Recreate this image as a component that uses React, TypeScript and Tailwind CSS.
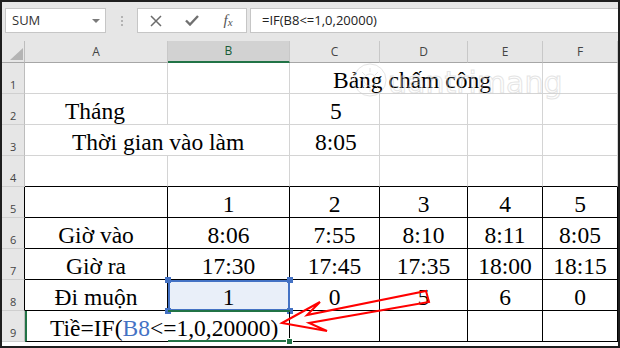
import React from "react";

type Cell = { t?: React.ReactNode; cls?: string; noR?: boolean };

const top: Cell[][] = [
    [{}, {}, { t: "Bảng chấm công", cls: "pl-[43px]", noR: true }, { noR: true }, {}, {}],
    [{ t: "Tháng", cls: "pl-[40px]" }, {}, { t: "5", cls: "pl-[40px]" }, {}, {}, {}],
    [{ t: "Thời gian vào làm", cls: "pl-[47px]", noR: true }, {}, { t: "8:05", cls: "pl-[25px]" }, {}, {}, {}],
    [{}, {}, {}, {}, {}, {}],
];

const table = [
    ["", "1", "2", "3", "4", "5"],
    ["Giờ vào", "8:06", "7:55", "8:10", "8:11", "8:05"],
    ["Giờ ra", "17:30", "17:45", "17:35", "18:00", "18:15"],
    ["Đi muộn", "1", "0", "5", "6", "0"],
];

const cols = ["A", "B", "C", "D", "E", "F"];

const cellBase = "h-[31px] flex items-end whitespace-nowrap text-[23.5px] leading-[26px] text-black font-['Liberation_Serif','Times_New_Roman',serif]";

function RowHead({ n, dark }: { n: number; dark?: boolean }) {
    return (
        <div className={`h-[31px] bg-[#e6e6e6] border-b border-b-[#cfcfcf] border-r flex items-end pl-[8px] pb-[2px] text-[11px] leading-[13px] text-[#444] ${dark ? "border-r-black" : "border-r-[#bdbdbd]"}`}>
            {n}
        </div>
    );
}

function Toolbar() {
    return (
        <div className="h-[39px] bg-[#e6e6e6] flex items-start pt-[6px] pl-[3px]">
            <div className="w-[101px] h-[25px] bg-white border border-[#c6c6c6] flex items-center justify-between pl-[6px] pr-[5px]">
                <span className="text-[13px] leading-none text-[#333]">SUM</span>
                <svg width="8" height="4" viewBox="0 0 8 4">
                    <path d="M0 0h8L4 4z" fill="#7a7a7a" />
                </svg>
            </div>
            <div className="w-[31px] h-[25px] flex flex-col items-center justify-center gap-[2px]">
                <span className="w-[2px] h-[2px] bg-[#b3b3b3]" />
                <span className="w-[2px] h-[2px] bg-[#b3b3b3]" />
                <span className="w-[2px] h-[2px] bg-[#b3b3b3]" />
            </div>
            <div className="w-[110px] h-[25px] bg-white border border-[#c6c6c6] flex">
                <div className="w-[36px] flex items-center justify-center">
                    <svg width="12" height="12" viewBox="0 0 12 12">
                        <path d="M1 1l10 10M11 1L1 11" stroke="#6b6b6b" strokeWidth="1.5" />
                    </svg>
                </div>
                <div className="w-[36px] flex items-center justify-center">
                    <svg width="14" height="11" viewBox="0 0 14 11">
                        <path d="M1 5.5l4 4L13 1" stroke="#707070" strokeWidth="2.4" fill="none" />
                    </svg>
                </div>
                <div className="w-[36px] flex items-center justify-center font-['Liberation_Serif',serif] italic text-[#555]">
                    <span className="text-[15px] leading-none">f</span>
                    <span className="text-[11px] leading-none mt-[4px]">x</span>
                </div>
            </div>
            <div className="ml-[3px] flex-1 h-[25px] bg-white border border-r-0 border-[#c6c6c6] flex items-center pl-[11px] text-[13px] text-[#222]">
                {"=IF(B8<=1,0,20000)"}
            </div>
        </div>
    );
}

function Sheet() {
    return (
        <div className="grid grid-cols-[23px_143px_122px_90px_88px_75px_75px] grid-rows-[22px_repeat(9,31px)]">
            <div className="relative bg-[#e6e6e6] border-r border-b border-r-[#bdbdbd] border-b-[#a6a6a6]">
                <svg className="absolute left-0 top-0" width="23" height="22" viewBox="0 0 23 22">
                    <path d="M8 19h13V7z" fill="#b4b4b4" />
                </svg>
            </div>
            {cols.map((c) => (
                <div
                    key={c}
                    className={`flex items-center justify-center text-[12px] border-r border-r-[#c8c8c8] ${
                        c === "B" ? "bg-[#d2d2d2] text-[#185c37] border-b-2 border-b-[#217346]" : "bg-[#e6e6e6] text-[#444] border-b border-b-[#a6a6a6]"
                    }`}
                >
                    {c}
                </div>
            ))}

            {top.map((row, i) => (
                <React.Fragment key={`t${i}`}>
                    <RowHead n={i + 1} />
                    {row.map((cell, j) => (
                        <div
                            key={j}
                            className={`${cellBase} border-b ${cell.noR ? "" : "border-r border-r-[#d4d4d4]"} ${i === 3 ? "border-b-black" : "border-b-[#d4d4d4]"} ${cell.cls ?? ""}`}
                        >
                            {cell.t}
                        </div>
                    ))}
                </React.Fragment>
            ))}

            {table.map((row, i) => (
                <React.Fragment key={`r${i}`}>
                    <RowHead n={i + 5} dark />
                    {row.map((v, j) => {
                        const sel = i === 3 && j === 1;
                        return (
                            <div key={j} className={`${cellBase} justify-center border-r border-b border-black ${sel ? "relative bg-[#e9eff9]" : ""}`}>
                                {v}
                                {sel && (
                                    <>
                                        <div className="absolute left-0 top-0 -right-px -bottom-px border-2 border-[#4472c4]" />
                                        <span className="absolute -left-[3px] -top-[3px] w-[6px] h-[6px] bg-[#4472c4]" />
                                        <span className="absolute -right-[4px] -top-[3px] w-[6px] h-[6px] bg-[#4472c4]" />
                                        <span className="absolute -left-[3px] -bottom-[4px] w-[6px] h-[6px] bg-[#4472c4]" />
                                        <span className="absolute -right-[4px] -bottom-[4px] w-[6px] h-[6px] bg-[#4472c4]" />
                                    </>
                                )}
                            </div>
                        );
                    })}
                </React.Fragment>
            ))}

            <RowHead n={9} />
            <div className={`${cellBase} border-b border-b-black border-l-2 border-l-[#217346] pl-[23px]`}>
                <span>
                    Tiề=IF(<span className="text-[#4472c4]">B8</span>
                    {"<=1,0,20000)"}
                </span>
                <span className="w-px h-[27px] bg-black mb-[1px]" />
            </div>
            <div className={`${cellBase} relative border-r border-b border-black`}>
                <div className="absolute left-0 -right-px -top-px -bottom-px border-y-2 border-[#217346]" />
                <span className="absolute -right-[4px] -bottom-[4px] w-[7px] h-[7px] bg-[#217346] border border-white" />
            </div>
            <div className={`${cellBase} border-r border-b border-black`} />
            <div className={`${cellBase} border-r border-b border-black`} />
            <div className={`${cellBase} border-r border-b border-black`} />
            <div className={`${cellBase} border-r border-b border-black`} />
        </div>
    );
}

export default function App() {
    return (
        <div className="w-[620px] h-[348px] border-2 border-[#1e1e1e] bg-white overflow-hidden font-['Open_Sans',sans-serif]">
            <div className="relative w-[616px] h-[344px]">
                <Toolbar />
                <Sheet />
                <svg className="absolute left-0 top-0 pointer-events-none" width="616" height="344" viewBox="2 2 616 344">
                    {/* watermark */}
                    <g opacity="0.55" fill="none" stroke="#cfcfcf" strokeWidth="1">
                        <circle cx="370" cy="80" r="16" />
                        <circle cx="370" cy="80" r="6" />
                        <path d="M370 68v4M370 88v4M358 80h4M378 80h4M362 72l3 3M375 85l3 3M378 72l-3 3M362 88l3-3" />
                        <text x="388" y="93" fontSize="30" fontFamily="DejaVu Sans, sans-serif">uantrimang</text>
                    </g>
                    {/* arrow */}
                    <polygon
                        points="282,323 320,302 307,315 426,291 429,302 309,323 327,331"
                        fill="none"
                        stroke="#ff0000"
                        strokeWidth="2"
                    />
                </svg>
            </div>
        </div>
    );
}
